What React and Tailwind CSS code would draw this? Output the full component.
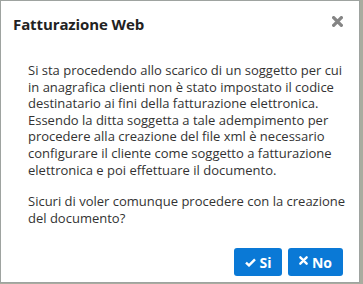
import { useState } from 'react';

// testo del messaggio, riga per riga come nella finestra originale
const paragraphs = [
    [
        'Si sta procedendo allo scarico di un soggetto per cui',
        'in anagrafica clienti non è stato impostato il codice',
        'destinatario ai fini della fatturazione elettronica.',
        'Essendo la ditta soggetta a tale adempimento per',
        'procedere alla creazione del file xml è necessario',
        'configurare il cliente come soggetto a fatturazione',
        'elettronica e poi effettuare il documento.'
    ],
    [
        'Sicuri di voler comunque procedere con la creazione',
        'del documento?'
    ]
];

function CheckIcon() {
    return (
        <svg width="11" height="9" viewBox="0 0 11 9" className="mr-[4px]">
            <path d="M1 4.6 L4 7.4 L10 1.4" fill="none" stroke="white" strokeWidth="2.4" />
        </svg>
    );
}

function TimesIcon({ color = 'white', size = 9, stroke = 2.6 }) {
    return (
        <svg width={size} height={size} viewBox="0 0 10 10">
            <path d="M1.5 1.5 L8.5 8.5 M8.5 1.5 L1.5 8.5" stroke={color} strokeWidth={stroke} strokeLinecap="round" />
        </svg>
    );
}

export default function App() {
    const [open, setOpen] = useState(true);

    return (
        <div className="w-[363px] h-[284px] bg-[#a9ac9f] overflow-hidden font-['Open_Sans',sans-serif]">
            {open && (
                <div className="w-[360px] h-[283px] bg-white border border-[#9ea3a0] flex flex-col">
                    {/* header */}
                    <div className="flex items-center justify-between pl-[12px] pr-[16px] pt-[9px] h-[38px]">
                        <h1 className="text-[15px] font-bold text-[#222] tracking-[-0.1px]">Fatturazione Web</h1>
                        <button onClick={() => setOpen(false)} className="mt-[-7px]">
                            <TimesIcon color="#858585" size={11} stroke={3} />
                        </button>
                    </div>

                    {/* body */}
                    <div className="pl-[27px] pt-[23px] text-[13px] leading-[16.6px] text-[#333]">
                        {paragraphs.map((lines, i) => (
                            <p key={i} className={i > 0 ? 'mt-[15px]' : ''}>
                                {lines.map((l) => (
                                    <span key={l} className="block whitespace-nowrap">{l}</span>
                                ))}
                            </p>
                        ))}
                    </div>

                    {/* footer */}
                    <div className="mt-auto flex justify-end gap-[6px] pr-[16px] pb-[6px]">
                        <button className="flex items-center justify-center w-[48px] h-[28px] rounded-[3px] bg-[#0a79d6] text-white text-[14px] font-bold">
                            <CheckIcon />Si
                        </button>
                        <button className="flex items-center justify-center gap-[4px] w-[55px] h-[28px] rounded-[3px] bg-[#0a79d6] text-white text-[14px] font-bold">
                            <span className="mt-[-4px]"><TimesIcon /></span>No
                        </button>
                    </div>
                </div>
            )}
        </div>
    );
}
